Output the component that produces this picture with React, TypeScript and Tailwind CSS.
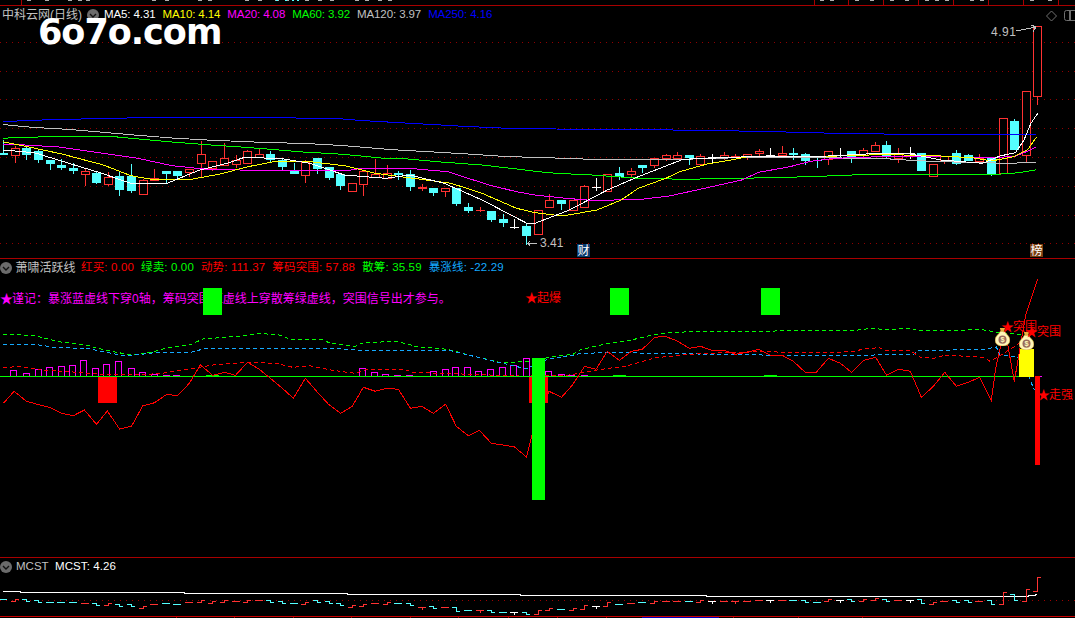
import React from 'react';

type Pt = [number, number];
type Candle = [number, number, number, number, 'c' | 'r' | 's' | 'w'];

const CYAN = '#54ffff';
const RED = '#ff3232';

// measured from zoomed crops: x is scaled 2.904, y is scaled 3
const toPts = (pts: Pt[], ox: number, oy: number) => pts.map(([x, y]) => [ox + x / 2.904, oy + y / 3] as Pt);
const both = (a: Pt[], b: Pt[], oy = 0) => [...toPts(a, 0, oy), ...toPts(b, 535, oy)];
const str = (pts: Pt[]) => pts.map(([x, y]) => `${x.toFixed(1)},${y.toFixed(1)}`).join(' ');
const cx = (i: number) => Math.round(3.2 + i * 11.62) + 0.5;

const candles: Candle[] = [
  [459, 465, 420, 465, 'c'], [445, 467, 437, 488, 'r'], [445, 465, 440, 480, 'c'], [454, 480, 450, 488, 'c'],
  [480, 492, 480, 510, 'c'], [495, 504, 478, 510, 'c'], [503, 513, 490, 522, 'c'], [514, 524, 505, 558, 'r'],
  [519, 549, 515, 552, 'c'], [531, 551, 515, 558, 'r'], [529, 572, 513, 587, 'c'], [529, 573, 492, 578, 'c'],
  [541, 584, 538, 584, 'r'], [535, 542, 507, 542, 'r'], [514, 522, 514, 551, 'c'], [514, 528, 514, 540, 'c'],
  [506, 516, 506, 532, 'r'], [463, 491, 423, 530, 'r'], [484, 504, 484, 512, 'r'], [475, 497, 430, 497, 'r'],
  [479, 491, 465, 503, 'r'], [454, 491, 450, 491, 'r'], [463, 472, 447, 472, 'r'], [463, 480, 453, 490, 'c'],
  [479, 501, 474, 510, 'c'], [513, 522, 489, 522, 'c'], [485, 524, 480, 549, 'r'], [474, 508, 474, 522, 'c'],
  [502, 534, 502, 540, 'c'], [522, 558, 522, 570, 'c'], [550, 575, 550, 575, 'r'], [514, 554, 514, 587, 'r'],
  [522, 530, 477, 530, 'r'], [520, 536, 495, 536, 'r'], [520, 526, 514, 540, 'c'], [522, 561, 510, 573, 'c'],
  [561, 566, 552, 572, 's'], [564, 579, 564, 587, 'c'], [565, 575, 565, 591, 'r'], [564, 612, 564, 618, 'c'],
  [621, 633, 610, 639, 'c'], [631, 635, 622, 635, 's'], [633, 660, 633, 666, 'c'], [657, 668, 643, 681, 'c'],
  [680, 681, 656, 686, 'w'], [678, 708, 668, 735, 'c'], [631, 704, 631, 704, 'r'], [601, 623, 582, 623, 'r'],
  [600, 611, 600, 630, 'c'], [600, 630, 600, 630, 'r'], [558, 620, 555, 620, 'r'], [561, 562, 534, 573, 'w'],
  [522, 572, 522, 572, 'r'], [519, 532, 502, 540, 'c'], [514, 524, 505, 530, 'r'], [495, 504, 495, 520, 'c'],
  [475, 497, 475, 505, 'r'], [466, 476, 462, 482, 'r'], [466, 476, 456, 476, 'r'], [465, 474, 465, 495, 'c'],
  [467, 491, 462, 491, 'r'], [471, 472, 462, 490, 'w'], [466, 472, 456, 480, 'r'], [469, 471, 462, 474, 's'],
  [463, 473, 463, 480, 'r'], [454, 461, 447, 470, 'r'], [465, 466, 444, 470, 'w'], [460, 467, 438, 470, 'r'],
  [460, 465, 445, 480, 'c'], [463, 483, 460, 495, 'c'], [481, 484, 473, 503, 'c'], [454, 479, 454, 495, 'r'],
  [465, 466, 445, 470, 'w'], [453, 475, 453, 488, 'c'], [451, 466, 445, 470, 'r'], [436, 453, 426, 453, 'r'],
  [435, 471, 423, 474, 'c'], [461, 472, 445, 489, 'r'], [458, 459, 441, 478, 'w'], [460, 513, 460, 513, 'c'],
  [493, 530, 493, 530, 'r'], [467, 478, 467, 492, 'r'], [460, 492, 450, 495, 'c'], [465, 484, 462, 484, 'c'],
  [475, 483, 463, 483, 'r'], [474, 523, 474, 527, 'c'], [355, 520, 355, 520, 'r'], [363, 449, 357, 449, 'c'],
  [274, 467, 274, 487, 'r'], [79, 289, 79, 315, 'r'],
];

const mcstY = [
  148, 150, 150, 153, 155, 157, 157, 160, 163, 163, 165, 165, 170, 162, 160, 161, 157, 152, 155, 152, 154, 152, 150,
  152, 155, 158, 158, 153, 157, 162, 168, 165, 160, 160, 160, 163, 170, 170, 170, 176, 180, 180, 183, 186, 187, 190,
  187, 177, 178, 177, 172, 168, 163, 161, 160, 157, 155, 152, 152, 153, 152, 152, 152, 152, 152, 149, 151, 150, 151,
  153, 155, 151, 151, 150, 150, 147, 149, 151, 151, 154, 158, 152, 152, 154, 152, 155, 145, 141, 135, 103,
];

const ma250 = both(
  [[8, 365], [93, 361], [195, 358], [330, 355], [465, 352], [737, 353], [973, 355], [1040, 361], [1140, 367], [1245, 373], [1345, 379], [1475, 385]],
  [[0, 385], [60, 387], [500, 391], [633, 394], [770, 397], [870, 400], [1075, 403], [1455, 403]],
);
const ma120 = both(
  [[8, 373], [30, 376], [93, 382], [195, 388], [300, 397], [400, 406], [500, 414], [600, 420], [737, 426], [900, 431], [1000, 437], [1140, 449], [1245, 455], [1345, 461], [1475, 470]],
  [[0, 472], [165, 478], [430, 478], [630, 472], [1000, 475], [1110, 482], [1240, 487], [1375, 490], [1456, 487]],
);
const ma60 = both(
  [[8, 415], [60, 412], [230, 409], [320, 409], [380, 415], [500, 426], [600, 434], [700, 441], [800, 449], [880, 456], [970, 461], [1040, 467], [1105, 474], [1175, 476], [1280, 486], [1400, 495], [1500, 507]],
  [[0, 514], [60, 520], [165, 525], [290, 534], [430, 538], [600, 535], [800, 530], [970, 523], [1340, 523], [1405, 518], [1456, 509]],
);
const ma20 = both(
  [[8, 432], [90, 436], [170, 441], [300, 460], [400, 475], [500, 497], [600, 508], [740, 511], [900, 511], [1010, 512], [1040, 506], [1200, 506], [1300, 515], [1420, 555], [1500, 575]],
  [[0, 585], [90, 595], [160, 601], [300, 599], [390, 588], [500, 563], [600, 540], [650, 517], [740, 500], [800, 484], [870, 475], [1000, 470], [1130, 468], [1300, 473], [1390, 470], [1420, 458], [1456, 441]],
);
const ma10 = both(
  [[8, 425], [80, 440], [180, 462], [300, 495], [380, 527], [440, 538], [555, 538], [640, 522], [720, 500], [790, 486], [900, 485], [1000, 497], [1090, 520], [1200, 535], [1310, 550], [1400, 580], [1500, 625]],
  [[0, 638], [80, 648], [180, 630], [250, 600], [300, 565], [380, 535], [420, 515], [500, 492], [590, 476], [620, 469], [850, 469], [1000, 464], [1140, 466], [1270, 473], [1325, 483], [1390, 470], [1430, 450], [1456, 412]],
);
const ma5 = both(
  [[8, 450], [100, 458], [200, 490], [290, 518], [380, 550], [480, 552], [580, 510], [660, 490], [710, 472], [820, 476], [900, 490], [1000, 525], [1120, 535], [1190, 525], [1290, 550], [1400, 600], [1530, 670]],
  [[0, 670], [100, 630], [210, 570], [300, 530], [430, 478], [620, 470], [850, 468], [1000, 460], [1090, 462], [1180, 480], [1300, 490], [1350, 468], [1395, 458], [1420, 420], [1440, 370], [1460, 340]],
);

const power = both(
  [[10, 445], [41, 409], [77, 439], [112, 449], [144, 457], [179, 475], [213, 482], [245, 465], [280, 508], [312, 468], [347, 522], [382, 514], [414, 453], [449, 443], [484, 418], [515, 422], [550, 385], [582, 329], [617, 361], [652, 352], [684, 361], [719, 322], [753, 343], [785, 370], [820, 400], [852, 430], [887, 370], [922, 412], [954, 448], [989, 475], [1023, 454], [1055, 397], [1090, 409], [1122, 400], [1157, 403], [1192, 460], [1224, 454], [1259, 475], [1294, 448], [1325, 514], [1360, 542], [1392, 526], [1427, 565], [1462, 570], [1494, 576], [1529, 606], [1545, 540]],
  [[41, 409], [77, 427], [108, 391], [144, 334], [177, 343], [210, 289], [245, 316], [280, 289], [312, 283], [347, 247], [378, 244], [413, 258], [448, 280], [481, 274], [513, 286], [548, 286], [582, 298], [617, 292], [649, 283], [684, 301], [718, 301], [750, 319], [785, 352], [817, 352], [852, 310], [887, 325], [919, 352], [954, 316], [989, 307], [1021, 361], [1055, 343], [1090, 349], [1122, 427], [1157, 394], [1190, 352], [1224, 394], [1259, 382], [1291, 367], [1325, 436], [1338, 340], [1357, 250], [1372, 265], [1392, 380], [1405, 300], [1425, 180], [1460, 72]],
  255,
);
const blueDash = both(
  [[8, 268], [100, 268], [165, 278], [250, 280], [300, 290], [360, 302], [410, 298], [460, 292], [555, 292], [590, 282], [720, 280], [970, 280], [1040, 285], [1300, 285], [1360, 300], [1460, 325], [1530, 342]],
  [[0, 328], [40, 312], [120, 300], [130, 295], [270, 292], [340, 296], [600, 298], [720, 302], [960, 302], [1010, 298], [1100, 298], [1115, 286], [1300, 284], [1340, 276], [1350, 300], [1400, 305], [1430, 355], [1450, 405]],
  255,
);
const greenDash = both(
  [[8, 240], [40, 238], [100, 242], [170, 260], [250, 270], [300, 284], [380, 300], [440, 292], [480, 280], [550, 270], [590, 252], [700, 243], [750, 235], [810, 240], [850, 255], [930, 252], [960, 265], [1030, 275], [1050, 265], [1150, 258], [1210, 275], [1300, 283], [1350, 297], [1450, 322]],
  [[0, 320], [40, 306], [110, 298], [130, 285], [200, 268], [280, 255], [340, 240], [400, 232], [470, 230], [930, 226], [980, 220], [1020, 224], [1090, 220], [1115, 228], [1300, 224], [1340, 232], [1420, 240], [1450, 262]],
  255,
);
const redDash = both(
  [[8, 337], [60, 335], [120, 345], [200, 350], [300, 358], [400, 360], [470, 355], [560, 340], [620, 330], [720, 322], [800, 325], [850, 337], [900, 332], [960, 345], [1030, 355], [1060, 345], [1170, 343], [1200, 352], [1530, 364]],
  [[5, 361], [100, 360], [180, 345], [270, 332], [350, 308], [470, 296], [640, 290], [760, 292], [850, 292], [930, 290], [950, 282], [1000, 278], [1020, 287], [1090, 287], [1120, 307], [1160, 310], [1190, 300], [1300, 307], [1320, 318], [1340, 308], [1400, 270], [1430, 240]],
  255,
);

const pinkBars: Pt[] = [
  ...toPts([[41, 346], [77, 355], [112, 342], [144, 337], [179, 334], [213, 331], [245, 316], [280, 340], [312, 328], [347, 319], [382, 340], [414, 352], [449, 358], [484, 361], [515, 361], [1055, 340], [1090, 352], [1122, 358], [1157, 361], [1192, 361], [1259, 349], [1294, 343], [1325, 337], [1360, 337], [1392, 349], [1427, 343], [1462, 337], [1494, 331], [1529, 310]], 0, 255),
  ...toPts([[41, 349], [77, 358], [108, 361], [144, 361]], 535, 255),
];

const Chevron = () => (
  <svg className="w-3 h-3 shrink-0" viewBox="0 0 12 12">
    <circle cx="6" cy="6" r="6" fill="#6b6b6b" />
    <path d="M3 5l3 3 3-3" fill="none" stroke="#111" strokeWidth="1.4" />
  </svg>
);

const Star = () => <span className="inline-block w-[12px] text-[13px] leading-[12px]">★</span>;

const Bag = ({ x, y }: { x: number; y: number }) => (
  <svg className="absolute w-[15px] h-[18px]" style={{ left: x, top: y }} viewBox="0 0 14 17">
    <path d="M4.500 0h5l-1 3.500h-3z" fill="#e8b040" />
    <path d="M5 3h4l1.500 2.500c2.500 2 3.500 4 3.500 6 0 3.500-3 5.500-7 5.500s-7-2-7-5.500c0-2 1-4 3.500-6z" fill="#fff6b8" stroke="#d09820" strokeWidth="0.6" />
    <circle cx="7" cy="11" r="3.800" fill="#9a6a5c" />
    <text x="7" y="13.600" textAnchor="middle" fontSize="7" fontWeight="700" fill="#fff6b8" fontFamily="Liberation Sans, sans-serif">$</text>
  </svg>
);

export default function App() {
  return (
    <div className="w-[1075px] h-[618px] bg-black overflow-hidden flex flex-col font-['Liberation_Sans','Noto_Sans_CJK_SC',sans-serif] text-[11.5px] leading-none">
      {/* top strip, only the bottom of the row above is visible */}
      <div className="relative h-[6px] border-b border-[#a80000] shrink-0">
        {[21, 814, 848, 883, 918, 953, 988, 1023, 1058].map((x) => (
          <div key={x} className="absolute top-0 bottom-0 w-px bg-[#a80000]" style={{ left: x }} />
        ))}
        {[27, 45, 68, 78, 86, 152, 165, 198, 208, 245, 258, 275, 285, 305, 318, 330, 355, 365, 378, 388, 820, 830, 855, 870, 890, 905, 925, 935, 945, 970, 980, 1030, 1048].map((x) => (
          <div key={x} className="absolute top-0 h-px w-[4px] bg-[#b0b0b0]" style={{ left: x }} />
        ))}
        {[276, 285, 292, 297].map((x) => (
          <div key={x} className="absolute top-0 h-px w-[2px] bg-[#54ffff]" style={{ left: x }} />
        ))}
      </div>

      {/* K line panel */}
      <div className="relative h-[253px] border-b border-[#a80000] shrink-0">
        <svg className="absolute inset-0" width="1075" height="252" viewBox="0 6 1075 252" shapeRendering="crispEdges">
          {[42, 71, 99, 128, 157, 186, 215, 243].map((y) => (
            <line key={y} x1="0" x2="1075" y1={y + 0.5} y2={y + 0.5} stroke="#900000" strokeDasharray="1 5" />
          ))}
          {candles.map(([t, b, wt, wb, k], i) => {
            const x = cx(i);
            const color = k === 'c' ? CYAN : k === 'w' ? '#ffffff' : RED;
            const top = Math.round(t / 3);
            const h = Math.max(1, Math.round((b - t) / 3));
            return (
              <g key={i}>
                <line x1={x} x2={x} y1={wt / 3} y2={wb / 3} stroke={color} />
                {k === 'r' ? (
                  <rect x={x - 4} y={top + 0.5} width="8" height={h} fill="#000" stroke={color} />
                ) : (
                  <rect x={x - 4.5} y={top} width="9" height={h} fill={color} />
                )}
              </g>
            );
          })}
          <polyline points={str(ma250)} fill="none" stroke="#0000ff" />
          <polyline points={str(ma120)} fill="none" stroke="#c0c0c0" />
          <polyline points={str(ma60)} fill="none" stroke="#00ff00" />
          <polyline points={str(ma20)} fill="none" stroke="#ff00ff" />
          <polyline points={str(ma10)} fill="none" stroke="#ffff00" />
          <polyline points={str(ma5)} fill="none" stroke="#ffffff" />
          <path d="M1016 31L1036 27M1031 25l5 2-3 5" fill="none" stroke="#c0c0c0" />
          <path d="M537 243h-9l2-2m-2 2l2 3" fill="none" stroke="#c0c0c0" />
        </svg>

        <div className="relative flex items-center h-[18px] pl-[2px] text-[#c0c0c0]">
          <span className="text-[12px] w-[85px]">中科云网(日线)</span>
          <Chevron />
          <div className="flex gap-[7px] ml-[5px] tracking-[-0.1px]">
            <span className="text-white">MA5: 4.31</span>
            <span className="text-[#ffff00]">MA10: 4.14</span>
            <span className="text-[#ff00ff]">MA20: 4.08</span>
            <span className="text-[#00ff00]">MA60: 3.92</span>
            <span className="text-[#c0c0c0]">MA120: 3.97</span>
            <span className="text-[#0000ff]">MA250: 4.16</span>
          </div>
        </div>

        {/* site watermark over the chart */}
        <div className="absolute left-[38px] top-[15px] text-white font-['DejaVu_Sans',sans-serif] font-bold text-[35px] leading-[22px] tracking-[-1px]">
          6o7o.com
        </div>

        <svg className="absolute left-[1045px] top-[3px] w-[30px] h-[14px]" viewBox="0 0 30 14">
          <path d="M6.500 2l5 5-5 5-5-5z" fill="none" stroke="#707070" />
          <rect x="19.500" y="1.500" width="14" height="10" rx="2" fill="none" stroke="#707070" />
          <rect x="24" y="2" width="2" height="9" fill="#707070" />
        </svg>

        <span className="absolute left-[991px] top-[20px] text-[12px] text-[#c0c0c0] tracking-[0.5px]">4.91</span>
        <span className="absolute left-[540px] top-[231px] text-[12px] text-[#c0c0c0]">3.41</span>
        <span className="absolute left-[577px] top-[238px] w-[13px] h-[13px] bg-[#0a3a6e] text-white text-[12px] flex items-center justify-center">财</span>
        <span className="absolute left-[1030px] top-[238px] w-[13px] h-[13px] bg-[#7a3d10] text-white text-[12px] flex items-center justify-center">榜</span>
      </div>

      {/* indicator panel */}
      <div className="relative h-[299px] border-b border-[#a80000] shrink-0">
        <div className="relative flex items-center h-[17px]">
          <Chevron />
          <span className="ml-[3.5px] w-[65.5px] text-[12px] text-[#c0c0c0]">萧啸活跃线</span>
          <div className="flex gap-[7px] text-[#ff0000] tracking-[0.15px]">
            <span>红买: 0.00</span>
            <span className="text-[#00ff00]">绿卖: 0.00</span>
            <span>动势: 111.37</span>
            <span>筹码突围: 57.88</span>
            <span className="text-[#00ff00]">散筹: 35.59</span>
            <span className="text-[#14aaff]">暴涨线: -22.29</span>
          </div>
        </div>

        <p className="relative mt-[17px] text-[12px] text-[#ff00ff] whitespace-nowrap">
          <Star />谨记：暴涨蓝虚线下穿0轴，筹码突围红虚线上穿散筹绿虚线，突围信号出才参与。
        </p>

        <svg className="absolute inset-0" width="1075" height="298" viewBox="0 259 1075 298" shapeRendering="crispEdges">
          {[203, 610, 761].map((x) => (
            <rect key={x} x={x} y="288" width="19" height="27" fill="#00ff00" />
          ))}
          <rect x="529" y="376" width="19" height="27" fill="#ff0000" />
          <rect x="98" y="376" width="19" height="27" fill="#ff0000" />
          {pinkBars.map(([x, y]) => (
            <rect key={x} x={Math.round(x) - 3.5} y={Math.round(y) + 0.5} width="6" height={376 - Math.round(y)} fill="none" stroke="#ff00ff" />
          ))}
          <polyline points={str(greenDash)} fill="none" stroke="#00ff00" strokeDasharray="4 3" />
          <polyline points={str(blueDash)} fill="none" stroke="#14aaff" strokeDasharray="4 3" />
          <polyline points={str(redDash)} fill="none" stroke="#ff0000" strokeDasharray="4 3" />
          <rect x="1019" y="349" width="15" height="28" fill="#ffff00" />
          <rect x="1035" y="376" width="5" height="89" fill="#ff0000" />
          <line x1="0" x2="1019" y1="376.5" y2="376.5" stroke="#00ff00" />
          <line x1="1040" x2="1042" y1="376.5" y2="376.5" stroke="#ff00ff" />
          {[206, 613, 764].map((x) => (
            <line key={x} x1={x} x2={x + 13} y1="375.5" y2="375.5" stroke="#00ff00" />
          ))}
          <polyline points={str(power)} fill="none" stroke="#ff0000" />
          <rect x="532" y="358" width="13" height="142" fill="#00ff00" />
        </svg>

        <Bag x={995} y={69} />
        <Bag x={1019} y={73} />
        <span className="absolute left-[525px] top-[33px] text-[12px] text-[#ff0000] whitespace-nowrap"><Star />起爆</span>
        <span className="absolute left-[1001px] top-[62px] text-[12px] text-[#ff0000] whitespace-nowrap"><Star />突围</span>
        <span className="absolute left-[1025px] top-[67px] text-[12px] text-[#ff0000] whitespace-nowrap"><Star />突围</span>
        <span className="absolute left-[1037px] top-[130px] text-[12px] text-[#ff0000] whitespace-nowrap"><Star />走强</span>
      </div>

      {/* MCST panel */}
      <div className="relative h-[59px] border-b border-[#c80000] shrink-0">
        <svg className="absolute inset-0" width="1075" height="58" viewBox="0 558 1075 58" shapeRendering="crispEdges">
          <line x1="0" x2="1075" y1="600.5" y2="600.5" stroke="#a00000" strokeDasharray="1 5" />
          <polyline
            points={str(both(
              [[8, 124], [60, 124], [60, 127], [535, 127], [535, 130], [1008, 130], [1008, 133], [1512, 133], [1512, 136], [1553, 136]],
              [[0, 136], [498, 136], [498, 139], [1432, 139], [1432, 136], [1452, 136], [1452, 133], [1458, 133]],
              550,
            ))}
            fill="none"
            stroke="#ffffff"
          />
          {candles.map(([t, b, , , k], i) => {
            const x = cx(i);
            const y = Math.round(550 + mcstY[i] / 3) + 0.5;
            const d = Math.round(((b - t) / 3) * 0.1);
            const color = k === 'c' ? CYAN : k === 'w' ? '#ffffff' : RED;
            const left = k === 'c' ? y - d : y + d;
            const right = k === 'c' ? y + d : y - d;
            return (
              <g key={i}>
                <path d={`M${x - 5} ${left}H${x}V${right}H${x + 3}`} fill="none" stroke={color} />
                {(k === 's' || k === 'w') && <line x1={x} x2={x} y1={y - 1} y2={y + 2} stroke={color} />}
              </g>
            );
          })}
        </svg>
        <div className="relative flex items-center h-[16px] mt-[0.5px] text-[#c0c0c0]">
          <Chevron />
          <span className="ml-[4px] w-[39px]">MCST</span>
          <span className="text-white tracking-[0.1px]">MCST: 4.26</span>
        </div>
      </div>

      {/* cut off row under the last panel */}
      <div className="relative flex-1">
        {[176, 234, 293, 351, 410, 458, 508, 557, 606, 733, 798, 862].map((x) => (
          <div key={x} className="absolute top-0 bottom-0 w-px bg-[#a80000]" style={{ left: x }} />
        ))}
        <div className="absolute left-[642px] top-0 bottom-0 w-[77px] bg-[#0000c0]" />
      </div>
    </div>
  );
}
